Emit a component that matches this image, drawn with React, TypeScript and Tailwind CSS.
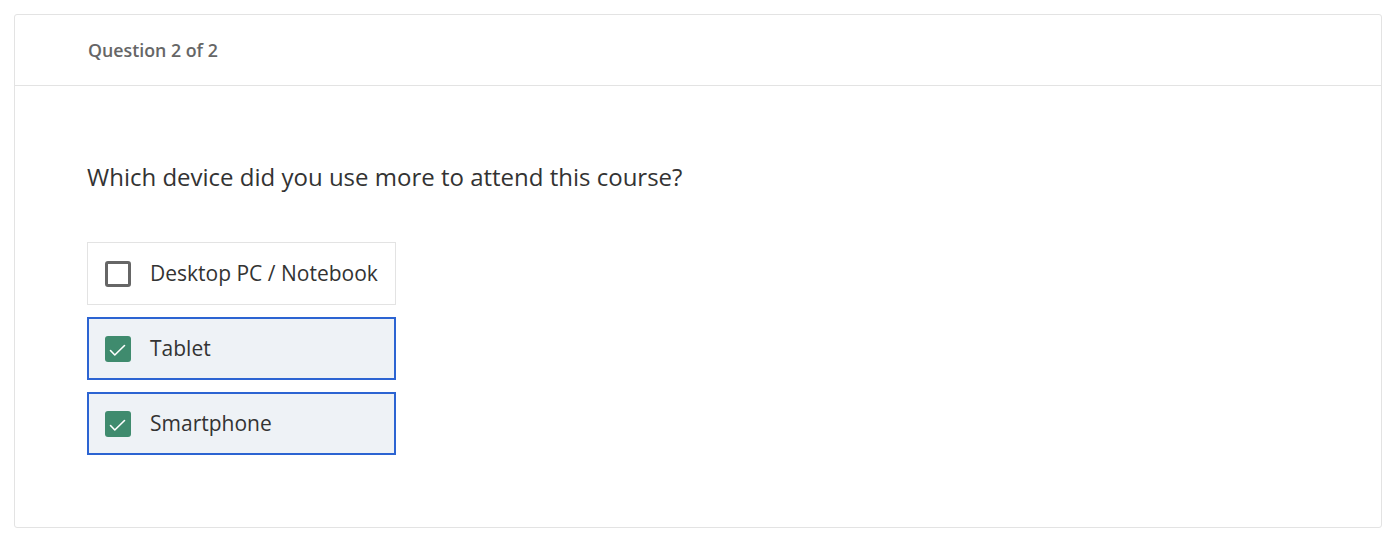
import React from "react";

const options = [
  { label: "Desktop PC / Notebook", checked: false },
  { label: "Tablet", checked: true },
  { label: "Smartphone", checked: true },
];

function Check({ checked }: { checked: boolean }) {
  if (!checked) {
    return <div className="w-[26px] h-[26px] rounded-[3px] border-[3px] border-[#666666] bg-white shrink-0" />;
  }
  return (
    <div className="w-[26px] h-[26px] rounded-[3px] bg-[#3f8b6e] shrink-0">
      <svg width="26" height="26" viewBox="0 0 26 26" fill="none">
        <path d="M5.5 14.5 L9.8 19 L19.5 9.5" stroke="white" strokeWidth="1.6" strokeLinecap="round" strokeLinejoin="round" />
      </svg>
    </div>
  );
}

export default function App() {
  return (
    <div className="w-[1392px] h-[542px] bg-white pt-[14px] pl-[14px]" style={{ fontFamily: '"Open Sans", sans-serif' }}>
      <div className="w-[1368px] h-[514px] border border-[#e3e3e3] rounded-[3px] flex flex-col">
        <div className="h-[71px] border-b border-[#e3e3e3] flex items-center pl-[73px]">
          <span className="text-[17.8px] font-semibold text-[#666666]">Question 2 of 2</span>
        </div>
        <div className="pl-[72px] pt-[75px]">
          <div className="text-[24px] leading-[32px] text-[#333333]">Which device did you use more to attend this course?</div>
          <div className="mt-[49px] flex flex-col gap-[12px]">
            {options.map((o) => (
              <div
                key={o.label}
                className={
                  o.checked
                    ? "w-[309px] h-[63px] border-2 border-[#2c64d2] bg-[#eef2f6] flex items-center pl-[16px] gap-[19px]"
                    : "w-[309px] h-[63px] border border-[#e3e3e3] bg-white flex items-center pl-[17px] gap-[19px]"
                }
              >
                <Check checked={o.checked} />
                <span className="text-[21px] text-[#333333]">{o.label}</span>
              </div>
            ))}
          </div>
        </div>
      </div>
    </div>
  );
}
